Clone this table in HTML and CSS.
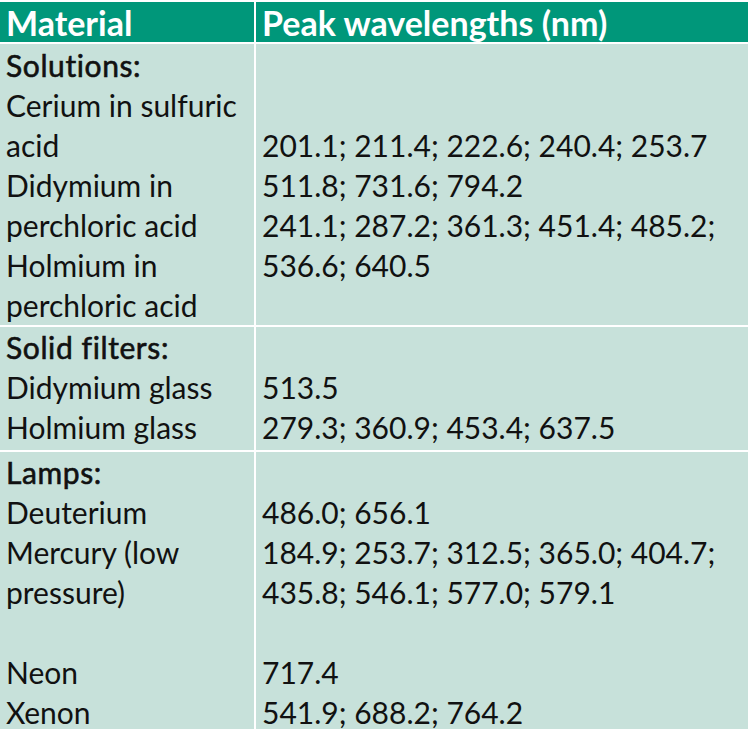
FILE: index.html
```html
<!DOCTYPE html>
<html>
<head>
<meta charset="utf-8">
<link rel="stylesheet" href="styles.css">
</head>
<body>
<div class="table">
  <div class="cell head">Material</div>
  <div class="cell head">Peak wavelengths (nm)</div>

  <div class="cell g1">
    <div class="line cat">Solutions:</div>
    <div class="line">Cerium in sulfuric</div>
    <div class="line">acid</div>
    <div class="line">Didymium in</div>
    <div class="line">perchloric acid</div>
    <div class="line">Holmium in</div>
    <div class="line">perchloric acid</div>
  </div>
  <div class="cell g1">
    <div class="line"></div>
    <div class="line"></div>
    <div class="line">201.1; 211.4; 222.6; 240.4; 253.7</div>
    <div class="line">511.8; 731.6; 794.2</div>
    <div class="line">241.1; 287.2; 361.3; 451.4; 485.2;</div>
    <div class="line">536.6; 640.5</div>
    <div class="line"></div>
  </div>

  <div class="cell g2">
    <div class="line cat">Solid filters:</div>
    <div class="line">Didymium glass</div>
    <div class="line">Holmium glass</div>
  </div>
  <div class="cell g2">
    <div class="line"></div>
    <div class="line">513.5</div>
    <div class="line">279.3; 360.9; 453.4; 637.5</div>
  </div>

  <div class="cell g3">
    <div class="line cat">Lamps:</div>
    <div class="line">Deuterium</div>
    <div class="line">Mercury (low</div>
    <div class="line">pressure)</div>
    <div class="line"></div>
    <div class="line">Neon</div>
    <div class="line">Xenon</div>
  </div>
  <div class="cell g3">
    <div class="line"></div>
    <div class="line">486.0; 656.1</div>
    <div class="line">184.9; 253.7; 312.5; 365.0; 404.7;</div>
    <div class="line">435.8; 546.1; 577.0; 579.1</div>
    <div class="line"></div>
    <div class="line">717.4</div>
    <div class="line">541.9; 688.2; 764.2</div>
  </div>
</div>
</body>
</html>
```
FILE: styles.css
```css
html, body {
  margin: 0;
  padding: 0;
  background: #ffffff;
}
body {
  padding-top: 2px;
  font-family: Lato, "Open Sans", sans-serif;
  color: #111111;
}
.table {
  width: 748px;
  display: grid;
  grid-template-columns: 254px 492px;
  column-gap: 2px;
  row-gap: 2px;
  background: #ffffff;
}
.cell {
  background: #c7e1da;
  padding-left: 6px;
  font-size: 30px;
}
.head {
  background: #00977a;
  color: #ffffff;
  font-weight: 700;
  font-size: 34px;
  height: 40px;
  line-height: 42px;
}
.line {
  height: 40px;
  line-height: 40px;
  white-space: nowrap;
}
.cat {
  font-weight: 400;
  letter-spacing: 0.6px;
  -webkit-text-stroke: 0.6px #111111;
}
.g1 { padding-top: 1px; padding-bottom: 0; }
.g2 { padding-bottom: 3px; }
.g3 { height: 277px; }
```
